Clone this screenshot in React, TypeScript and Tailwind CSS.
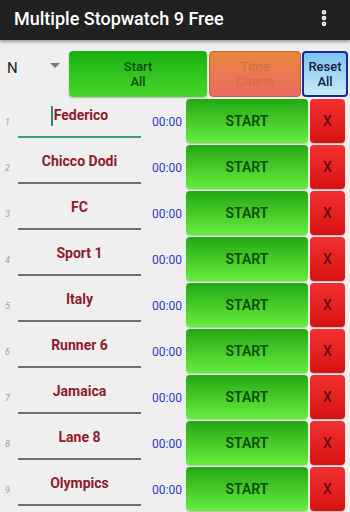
import { EllipsisVertical } from "lucide-react";

const names = [
  "Federico",
  "Chicco Dodi",
  "FC",
  "Sport 1",
  "Italy",
  "Runner 6",
  "Jamaica",
  "Lane 8",
  "Olympics",
];

function Row({ n, name, focused }: { n: number; name: string; focused: boolean }) {
  return (
    <div className="flex h-[46px] items-stretch">
      <div className="flex w-[18px] items-center pl-[5px] pt-[3px] text-[9px] italic text-[#a0a0a0]">
        {n}
      </div>
      <div className="flex w-[123px] flex-col">
        <div className="relative flex h-[38px] items-center justify-center pb-[3px] text-[14px] font-bold text-[#8e1b2c]">
          {focused && <span className="mr-[1px] h-[20px] w-[2px] bg-[#2b8a7a]" />}
          {name}
        </div>
        <div className={focused ? "h-[2px] bg-[#3c9a8a]" : "h-[2px] bg-[#707070]"} />
      </div>
      <div className="flex w-[45px] items-center pl-[11px] pt-[2px] text-[12px] text-[#2a3bc4]">
        00:00
      </div>
      <div className="flex py-[1px]">
        <button className="flex w-[122px] items-center justify-center rounded-[4px] bg-gradient-to-b from-[#20a812] to-[#66ee3e] text-[14px] font-semibold text-[#0e4a0a] shadow-[0_1px_1px_rgba(0,0,0,0.2)]">
          START
        </button>
        <button className="ml-[2px] flex w-[35px] items-center justify-center rounded-[4px] bg-gradient-to-b from-[#f23030] to-[#d81010] text-[14px] font-medium text-[#6a0a0a] shadow-[0_1px_1px_rgba(0,0,0,0.2)]">
          X
        </button>
      </div>
    </div>
  );
}

export default function App() {
  return (
    <div className="h-[512px] w-[350px] overflow-hidden bg-[#efefef] font-['Roboto',sans-serif]">
      <div className="flex h-[40px] items-center justify-between bg-[#212121] pl-[14px] pr-[16px] shadow-[0_2px_3px_rgba(0,0,0,0.35)]">
        <span className="pb-[3px] text-[18px] font-medium text-white">Multiple Stopwatch 9 Free</span>
        <EllipsisVertical className="mb-[4px] h-[20px] w-[20px] text-white" strokeWidth={3.5} />
      </div>

      <div className="flex h-[58px] items-stretch pb-[1px] pt-[11px]">
        <div className="flex w-[69px] items-start pl-[7px] pt-[6px]">
          <span className="text-[15px] text-[#222]">N</span>
          <span className="ml-[32px] mt-[6px] h-0 w-0 border-x-[5px] border-t-[5px] border-x-transparent border-t-[#7a7a7a]" />
        </div>
        <button className="flex w-[138px] flex-col items-center justify-center rounded-[4px] bg-gradient-to-b from-[#16b012] to-[#46d82a] text-[13px] font-medium leading-[15px] text-[#0d4d0a] shadow-[0_1px_2px_rgba(0,0,0,0.25)]">
          <span>Start</span>
          <span>All</span>
        </button>
        <button className="ml-[2px] flex w-[92px] flex-col items-center justify-center rounded-[4px] border border-[#b86a3a] bg-gradient-to-b from-[#e7873a] to-[#ee6a62] text-[13px] leading-[15px] text-[#c9704e]">
          <span>Time</span>
          <span>Charts</span>
        </button>
        <button className="ml-[1px] flex w-[46px] flex-col items-center justify-center rounded-[4px] border-2 border-[#1a2a9a] bg-gradient-to-b from-[#7cc4ee] to-[#c8ecf6] text-[13px] font-medium leading-[15px] text-[#14204a]">
          <span>Reset</span>
          <span>All</span>
        </button>
      </div>

      <div className="flex flex-col">
        {names.map((name, i) => (
          <Row key={i} n={i + 1} name={name} focused={i === 0} />
        ))}
      </div>
    </div>
  );
}
